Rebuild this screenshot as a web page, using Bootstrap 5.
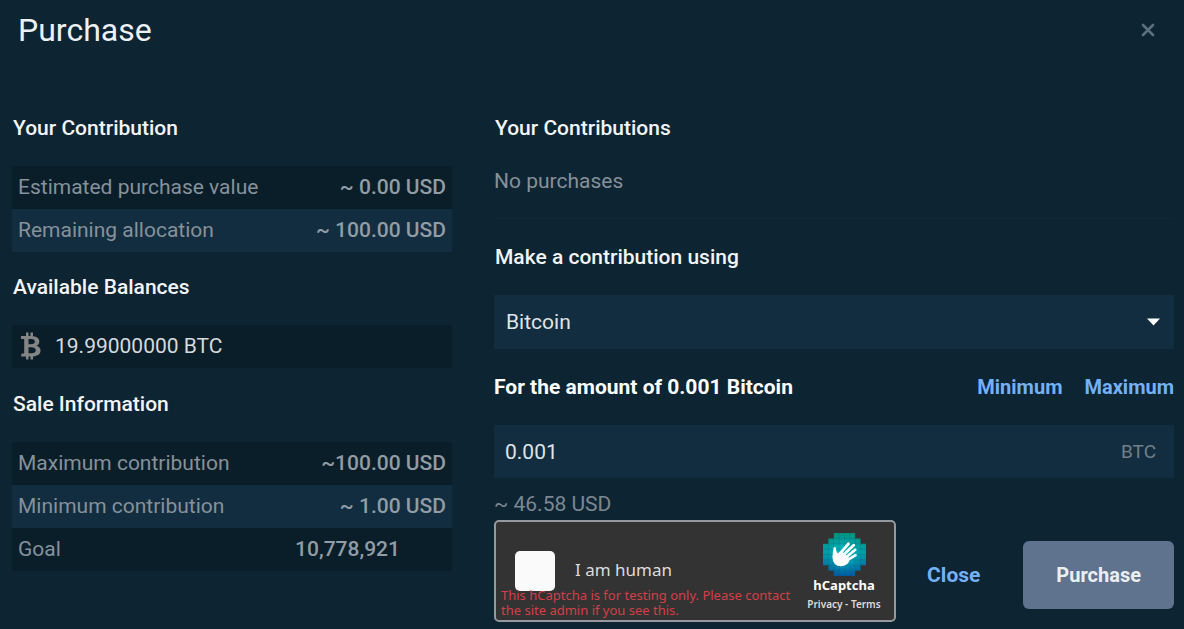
<!DOCTYPE html>
<html lang="en">
<head>
<meta charset="utf-8">
<meta name="viewport" content="width=device-width, initial-scale=1">
<title>Purchase</title>
<link href="https://cdn.jsdelivr.net/npm/bootstrap@5.3.0/dist/css/bootstrap.min.css" rel="stylesheet">
<style>
  :root { --panel: #0d2433; --row-dark: #0a1e2a; --row-light: #132d40; --muted: #86919a; --link: #73b1f7; }
  body { background: var(--panel); color: #e4e8ea; font-family: Roboto, "Liberation Sans", sans-serif; font-size: 21px; line-height: 26px; }
  .sale-header { height: 82px; padding: 10px 20px 0 18px; border-bottom: 1px solid #0e2230; }
  .sale-header h1 { font-size: 32px; line-height: 40px; font-weight: 400; color: #eef1f3; }
  .close-btn { color: #5a7080; line-height: 0; margin: 6px 9px 0 0; }
  .sale-body { display: grid; grid-template-columns: 11fr 17fr; column-gap: 42px; padding: 33px 10px 7px 12px; }
  .section-title { font-size: 21px; line-height: 26px; font-weight: 500; color: #f2f4f5; margin: 0 0 25px; padding-left: 1px; }
  .stripes { width: 100%; margin-bottom: 22px; color: var(--muted); }
  .stripes tr { height: 43px; background: var(--row-dark); }
  .stripes tr:nth-child(even) { background: var(--row-light); }
  .stripes th { font-weight: 400; padding: 0 6px 2px; }
  .stripes td { font-weight: 500; padding: 0 6px 2px; text-align: right; color: #929ca4; }
  .stripes td.unitless { padding-right: 52px; }
  .balance { height: 43px; background: var(--row-dark); padding: 0 9px 2px; gap: 14px; margin-bottom: 23px; color: #d5dadd; }
  .history { color: var(--muted); height: 53px; padding-top: 2px; border-bottom: 1px solid #0c2a3e; margin-bottom: 25px; }
  .form-select.field, .form-control.field { background-color: var(--row-light); border: 0; border-radius: 0; color: #dfe4e7; font-size: 21px; line-height: 26px; padding: 14px 12px; }
  .form-select.field { background-image: none; height: 54px; padding-top: 13px; }
  .form-control.field { height: 53px; padding: 13px 11px; }
  .caret { top: 23px; right: 14px; }
  .unit { top: 14px; right: 18px; font-size: 19px; color: #728089; }
  .amount-row { margin: 25px 0; }
  .amount-row label { font-weight: 700; color: #fff; }
  .limits { gap: 22px; }
  .limit { color: var(--link); font-size: 20px; font-weight: 700; text-decoration: none; }
  .estimate { color: #7b8891; margin-top: 13px; padding-bottom: 3px; }
  .captcha { width: 402px; height: 102px; background: #333; border: 2px solid #95999d; border-radius: 5px; font-family: "Noto Sans", "Open Sans", sans-serif; color: #dcdcdc; }
  .captcha .form-check-input { width: 40px; height: 40px; margin: 0 0 0 19px; background: #fafafa; border: 0; border-radius: 5px; }
  .captcha .human { font-size: 17px; line-height: 24px; margin-left: 20px; padding-bottom: 2px; }
  .captcha .warn { left: 5px; bottom: 2px; color: #d43f47; font-size: 13px; line-height: 15px; width: 296px; }
  .captcha .logo-box { width: 84px; margin: 11px 8px 0 auto; line-height: 16px; }
  .captcha .brand-name { font-size: 13px; font-weight: 700; color: #fff; line-height: 19px; }
  .captcha .legal { font-size: 10px; font-weight: 600; line-height: 18px; }
  .captcha .legal a { color: inherit; text-decoration: none; }
  .actions { gap: 31px; padding-top: 8px; }
  .action { font-size: 21px; line-height: 26px; font-weight: 700; border: 0; border-radius: 6px; }
  .action-close { color: var(--link); padding: 20px 12px; }
  .action-buy, .action-buy:hover { background: #5f738e; color: #eceff2; padding: 21px 33px; font-size: 20px; }
</style>
</head>
<body>
<header class="sale-header d-flex justify-content-between align-items-start">
  <h1 class="m-0">Purchase</h1>
  <button type="button" class="close-btn btn p-0 border-0" aria-label="Dismiss">
    <svg width="14" height="28" viewBox="0 0 14 28"><path d="M2 9l10 10M12 9L2 19" stroke="currentColor" stroke-width="2.6" stroke-linecap="round"/></svg>
  </button>
</header>
<main class="sale-body">
  <section>
    <h2 class="section-title">Your Contribution</h2>
    <table class="stripes">
      <tbody>
        <tr><th scope="row">Estimated purchase value</th><td>~ 0.00 USD</td></tr>
        <tr><th scope="row">Remaining allocation</th><td>~ 100.00 USD</td></tr>
      </tbody>
    </table>
    <h2 class="section-title">Available Balances</h2>
    <div class="balance d-flex align-items-center">
      <svg width="20" height="28" viewBox="0 0 20 28" fill="#858585"><path fill-rule="evenodd" d="M0 4h5V.5h2.500V4h2V.5H12v3.700c4 .4 6.300 2.200 6.300 5.300 0 2.200-1.100 3.600-3 4.300 2.800.7 4.200 2.300 4.200 4.800 0 3.700-2.800 5.600-7.500 5.800v3.100H9.500v-3h-2v3H5v-3H0l.6-3h2.600V7H0zM7.500 7v5.300h2.200c2.800 0 4.200-.9 4.200-2.700 0-1.900-1.400-2.600-4-2.600zm0 8.200v6h2.900c2.900 0 4.400-.9 4.400-3s-1.600-3-4.600-3z"/></svg>
      <span>19.99000000 BTC</span>
    </div>
    <h2 class="section-title">Sale Information</h2>
    <table class="stripes mb-0">
      <tbody>
        <tr><th scope="row">Maximum contribution</th><td>~100.00 USD</td></tr>
        <tr><th scope="row">Minimum contribution</th><td>~ 1.00 USD</td></tr>
        <tr><th scope="row">Goal</th><td class="unitless">10,778,921</td></tr>
      </tbody>
    </table>
  </section>
  <form onsubmit="return false">
    <h2 class="section-title">Your Contributions</h2>
    <div class="history">No purchases</div>
    <h2 class="section-title"><label for="currency">Make a contribution using</label></h2>
    <div class="position-relative">
      <select id="currency" class="form-select field"><option>Bitcoin</option></select>
      <svg class="caret position-absolute pe-none" width="13" height="8" viewBox="0 0 13 8"><path d="M0 .5h13L6.500 7.500z" fill="#fff"/></svg>
    </div>
    <div class="amount-row d-flex justify-content-between align-items-center">
      <label for="amount">For the amount of 0.001 Bitcoin</label>
      <div class="limits d-flex"><a class="limit" href="#min">Minimum</a><a class="limit" href="#max">Maximum</a></div>
    </div>
    <div class="position-relative">
      <input id="amount" class="form-control field" type="text" value="0.001">
      <span class="unit position-absolute">BTC</span>
    </div>
    <div class="estimate">~ 46.58 USD</div>
    <div class="d-flex justify-content-between align-items-center">
      <div class="captcha position-relative d-flex align-items-start flex-shrink-0">
        <div class="d-flex align-items-center align-self-center">
          <input id="human" type="checkbox" class="form-check-input">
          <label for="human" class="human">I am human</label>
        </div>
        <div class="logo-box text-center">
          <svg class="d-block mx-auto" width="43" height="43" viewBox="0 0 32 32">
            <defs>
              <linearGradient id="sea" x1="0" y1="0" x2="0" y2="1"><stop offset="0" stop-color="#00937c"/><stop offset=".45" stop-color="#00a0a4"/><stop offset="1" stop-color="#0058a0"/></linearGradient>
              <radialGradient id="glow"><stop offset="0" stop-color="#00d8e0" stop-opacity=".8"/><stop offset="1" stop-color="#00a0c0" stop-opacity="0"/></radialGradient>
              <clipPath id="disc"><path d="M8 0h16v4h4v4h4v16h-4v4h-4v4H8v-4H4v-4H0V8h4V4h4z"/></clipPath>
            </defs>
            <g clip-path="url(#disc)">
              <path d="M0 0h32v32H0z" fill="url(#sea)"/><path d="M0 0h32v32H0z" fill="url(#glow)"/>
              <path d="M4 0v32M8 0v32M12 0v32M16 0v32M20 0v32M24 0v32M28 0v32M0 4h32M0 8h32M0 12h32M0 16h32M0 20h32M0 24h32M0 28h32" stroke="#005870" stroke-opacity=".35" stroke-width=".5"/>
            </g>
            <g stroke="#fff" stroke-width="2" stroke-linecap="round" stroke-linejoin="round" fill="none">
              <path d="M12 16l7-8M14 17.500l9-8.500M16 19l8-6.500M17 21l7.200-4.500M9 18l-.3-6.500"/>
              <path d="M8.500 13.500q1.500 1 2 3.500l3-2.500 5.500 5q-1 4-5 4.200-6 .3-6-6z" fill="#fff"/>
            </g>
          </svg>
          <div class="brand-name">hCaptcha</div>
          <div class="legal text-nowrap"><a href="#privacy">Privacy</a> - <a href="#terms">Terms</a></div>
        </div>
        <div class="warn position-absolute">This hCaptcha is for testing only. Please contact the site admin if you see this.</div>
      </div>
      <div class="actions d-flex align-items-center justify-content-end">
        <button type="button" class="btn action action-close">Close</button>
        <button type="submit" class="btn action action-buy">Purchase</button>
      </div>
    </div>
  </form>
</main>
<script src="https://cdn.jsdelivr.net/npm/bootstrap@5.3.0/dist/js/bootstrap.bundle.min.js"></script>
</body>
</html>
